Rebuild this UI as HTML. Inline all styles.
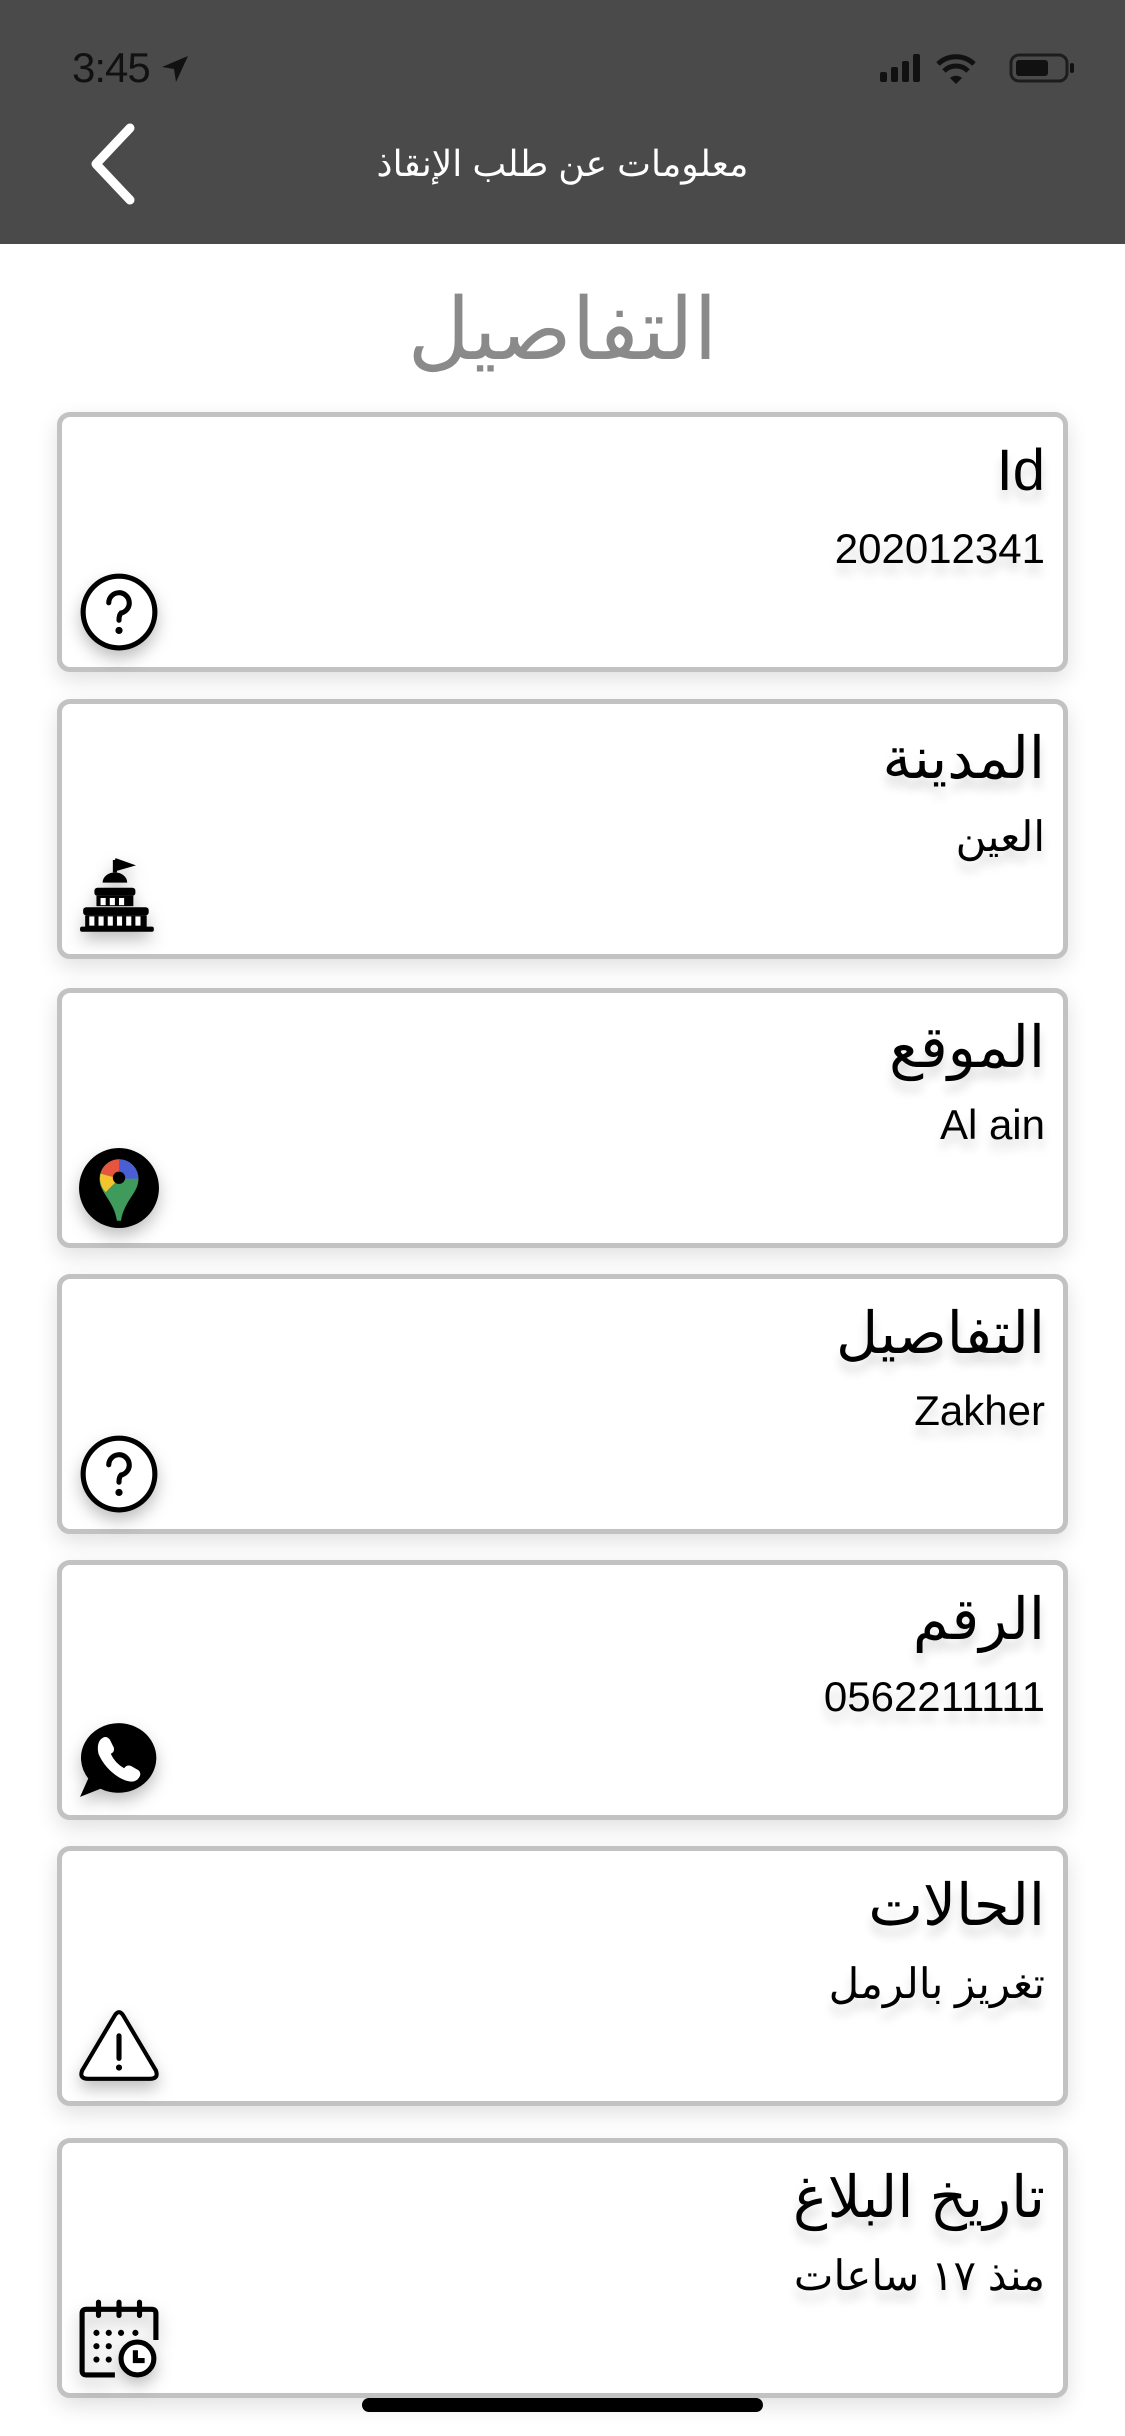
<!DOCTYPE html>
<html><head><meta charset="utf-8"><style>
*{margin:0;padding:0;box-sizing:border-box}
body{width:1125px;height:2436px;background:#fff;position:relative;overflow:hidden;font-family:"Liberation Sans","Noto Sans CJK SC",sans-serif}
.hdr{position:absolute;left:0;top:0;width:1125px;height:244px;background:#4a4a4a}
.time{position:absolute;left:72px;top:44px;font-size:42px;color:#111;letter-spacing:-1px}
.ttl{position:absolute;left:0;width:1125px;top:143px;text-align:center;color:#fff;font-size:36px;direction:rtl}
.h1{position:absolute;left:0;width:1125px;top:280px;text-align:center;color:#8a8a8a;font-size:86px;direction:rtl}
.card{position:absolute;left:57px;width:1011px;height:260px;border:5px solid #c2c2c2;border-radius:13px;background:#fff;box-shadow:0 8px 22px rgba(0,0,0,.12)}
.t{position:absolute;right:18px;top:20px;font-size:58px;color:#000;direction:rtl;text-shadow:0 10px 10px rgba(0,0,0,.15)}
.v{position:absolute;right:18px;top:108px;font-size:42px;color:#000;direction:rtl;text-shadow:0 10px 10px rgba(0,0,0,.15)}
.ic{position:absolute;left:16px;bottom:14px;width:82px;height:82px;filter:drop-shadow(0 8px 8px rgba(0,0,0,.25))}
.home{position:absolute;left:362px;top:2398px;width:401px;height:14px;border-radius:7px;background:#000}
</style></head><body>
<div class="hdr">
<div class="time">3:45 <svg width="30" height="30" viewBox="0 0 30 30" style="vertical-align:-2px"><path d="M28 2 L2 13 L14 15 L16 28 Z" fill="#111"/></svg></div>
<svg style="position:absolute;left:876px;top:52px" width="215" height="32" viewBox="0 0 215 32">
<rect x="4" y="20" width="7" height="10" rx="2" fill="#111"/><rect x="15" y="15" width="7" height="15" rx="2" fill="#111"/><rect x="26" y="9" width="7" height="21" rx="2" fill="#111"/><rect x="37" y="2" width="7" height="28" rx="2" fill="#111"/>
<path d="M62 12 A26 26 0 0 1 98 12" stroke="#111" stroke-width="5" fill="none"/><path d="M68 19 A17 17 0 0 1 92 19" stroke="#111" stroke-width="5" fill="none"/><path d="M74 26 L80 32 L86 26 A9 9 0 0 0 74 26Z" fill="#111"/>
<rect x="135" y="3" width="56" height="26" rx="8" stroke="#111" stroke-width="3" fill="none" opacity=".8"/><rect x="140" y="8" width="32" height="16" rx="3" fill="#111"/><rect x="194" y="11" width="4" height="10" rx="2" fill="#111"/>
</svg>
<svg style="position:absolute;left:86px;top:122px" width="54" height="84" viewBox="0 0 54 84"><path d="M44 6 L10 42 L44 78" stroke="#fff" stroke-width="9" stroke-linecap="round" stroke-linejoin="round" fill="none"/></svg>
<div class="ttl">معلومات عن طلب الإنقاذ</div>
</div>
<div class="h1">التفاصيل</div>

<div class="card" style="top:412px"><div class="t">Id</div><div class="v">202012341</div>
<svg class="ic" viewBox="0 0 80 80"><circle cx="40" cy="40" r="35" stroke="#000" stroke-width="5" fill="#fff"/><path d="M30 31 A10 10 0 1 1 42 41 Q40 43 40 48" stroke="#000" stroke-width="5" fill="none" stroke-linecap="round"/><circle cx="40" cy="58" r="3.5" fill="#000"/></svg></div>

<div class="card" style="top:699px"><div class="t">المدينة</div><div class="v">العين</div>
<svg class="ic" viewBox="0 0 80 80"><path d="M36 2 L36 14 M36 2 L50 7 L36 11" stroke="#000" stroke-width="4" fill="#000"/><path d="M24 24 A12 10 0 0 1 48 24Z" fill="#000"/><rect x="16" y="29" width="40" height="8" rx="3" fill="#000"/><path d="M18 37h36v10H18z" fill="#000"/><rect x="22" y="39" width="5" height="7" fill="#fff"/><rect x="31" y="39" width="5" height="7" fill="#fff"/><rect x="40" y="39" width="5" height="7" fill="#fff"/><rect x="5" y="48" width="64" height="8" rx="3" fill="#000"/><rect x="7" y="56" width="60" height="12" fill="#000"/><rect x="11" y="57" width="5" height="9" fill="#fff"/><rect x="20" y="57" width="5" height="9" fill="#fff"/><rect x="29" y="57" width="5" height="9" fill="#fff"/><rect x="38" y="57" width="5" height="9" fill="#fff"/><rect x="47" y="57" width="5" height="9" fill="#fff"/><rect x="56" y="57" width="5" height="9" fill="#fff"/><rect x="2" y="67" width="72" height="5" rx="2" fill="#000"/></svg></div>

<div class="card" style="top:988px"><div class="t">الموقع</div><div class="v">Al ain</div>
<svg class="ic" viewBox="0 0 80 80"><circle cx="40" cy="40" r="39" fill="#000"/><path d="M40 12 A19 19 0 0 1 59 31 C59 45 45 52 42 72 L38 72 C35 52 21 45 21 31 A19 19 0 0 1 40 12Z" fill="#3f9b5c"/><path d="M40 12 A19 19 0 0 1 59 31 L40 31Z" fill="#4a5fd4"/><path d="M40 12 A19 19 0 0 0 22 26 L40 31Z" fill="#e8553f"/><path d="M22 26 A19 19 0 0 0 27 44 L40 31Z" fill="#f3c42e"/><circle cx="40" cy="30" r="6" fill="#000"/></svg></div>

<div class="card" style="top:1274px"><div class="t">التفاصيل</div><div class="v">Zakher</div>
<svg class="ic" viewBox="0 0 80 80"><circle cx="40" cy="40" r="35" stroke="#000" stroke-width="5" fill="#fff"/><path d="M30 31 A10 10 0 1 1 42 41 Q40 43 40 48" stroke="#000" stroke-width="5" fill="none" stroke-linecap="round"/><circle cx="40" cy="58" r="3.5" fill="#000"/></svg></div>

<div class="card" style="top:1560px"><div class="t">الرقم</div><div class="v">0562211111</div>
<svg class="ic" viewBox="0 0 80 80"><path d="M40 4 A37 34 0 1 1 22 68 L2 76 L10 58 A37 34 0 0 1 40 4Z" fill="#000"/><path d="M22 20 Q27 15 31 20 L35 28 Q36 32 32 34 Q36 43 45 48 Q48 44 52 46 L59 50 Q63 54 58 59 Q52 64 40 57 Q26 48 20 34 Q18 25 22 20Z" fill="#fff"/></svg></div>

<div class="card" style="top:1846px"><div class="t">الحالات</div><div class="v">تغريز بالرمل</div>
<svg class="ic" viewBox="0 0 80 80"><path d="M36 10 Q40 4 44 10 L76 64 Q79 72 70 72 L10 72 Q1 72 4 64Z" stroke="#000" stroke-width="4" fill="#fff" stroke-linejoin="round"/><path d="M40 30 L40 52" stroke="#000" stroke-width="5" stroke-linecap="round"/><circle cx="40" cy="61" r="3" fill="#000"/></svg></div>

<div class="card" style="top:2138px"><div class="t">تاريخ البلاغ</div><div class="v">منذ ١٧ ساعات</div>
<svg class="ic" viewBox="0 0 80 80"><path d="M36 76 H8 Q4 76 4 72 V16 Q4 12 8 12 H72 Q76 12 76 16 V42" stroke="#000" stroke-width="5" fill="none"/><path d="M20 5V18 M40 5V18 M60 5V18" stroke="#000" stroke-width="5" stroke-linecap="round"/><g fill="#000"><circle cx="18" cy="35" r="3"/><circle cx="30" cy="35" r="3"/><circle cx="42" cy="35" r="3"/><circle cx="56" cy="35" r="3"/><circle cx="18" cy="48" r="3"/><circle cx="30" cy="48" r="3"/><circle cx="18" cy="61" r="3"/><circle cx="30" cy="61" r="3"/></g><circle cx="58" cy="60" r="16" stroke="#000" stroke-width="5" fill="#fff"/><path d="M56 52V62H65" stroke="#000" stroke-width="5" fill="none"/></svg></div>

<div class="home"></div>
</body></html>
